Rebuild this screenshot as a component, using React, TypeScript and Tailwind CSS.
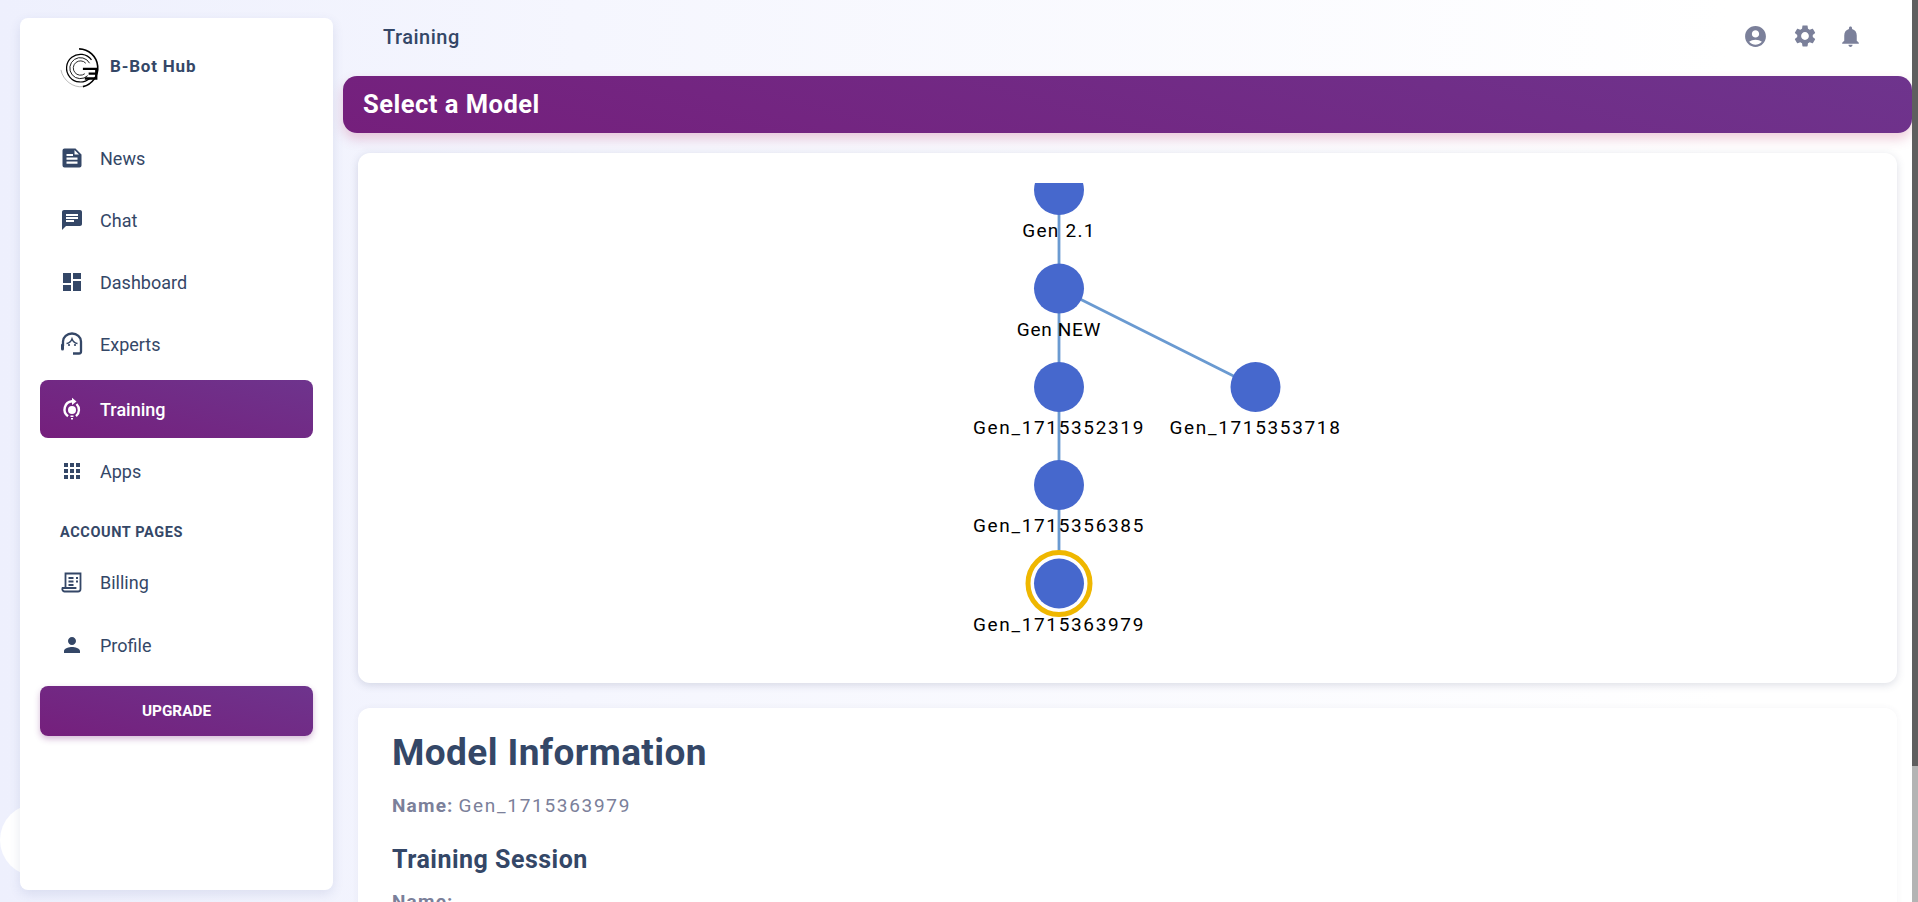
import React from "react";

const F = "font-['Roboto','Liberation_Sans',sans-serif]";

function P({ d, className = "" }: { d: string; className?: string }) {
  return (
    <svg viewBox="0 0 24 24" fill="currentColor" className={className}>
      <path fillRule="evenodd" d={d} />
    </svg>
  );
}

const icons: Record<string, string> = {
  News: "M5 2.500h10.500L21.500 8.500V19.500a2 2 0 0 1-2 2H4.500a2 2 0 0 1-2-2V4.500a2 2 0 0 1 2-2zM6.500 8v2H13V8zM6.500 11.500v2.200H17.500v-2.200zM6.500 15.500v2.200H17.500v-2.200zM14.500 4v4.500H19z",
  Chat: "M20 2H4c-1.100 0-2 .9-2 2v18l4-4h14c1.100 0 2-.9 2-2V4c0-1.100-.9-2-2-2zM6 9h12v2H6V9zm8 5H6v-2h8v2zm4-6H6V6h12v2z",
  Dashboard: "M3 13h8V3H3v10zm0 8h8v-6H3v6zm10 0h8V11h-8v10zm0-18v6h8V3h-8z",
  Apps: "M4 8h4V4H4v4zm6 12h4v-4h-4v4zm-6 0h4v-4H4v4zm0-6h4v-4H4v4zm6 0h4v-4h-4v4zm6-10v4h4V4h-4zm-6 4h4V4h-4v4zm6 6h4v-4h-4v4zm0 6h4v-4h-4v4z",
  Profile: "M12 12c2.210 0 4-1.790 4-4s-1.790-4-4-4-4 1.790-4 4 1.790 4 4 4zm0 2c-2.670 0-8 1.340-8 4v2h16v-2c0-2.660-5.330-4-8-4z",
};

function Experts() {
  return (
    <svg viewBox="0 0 24 24" fill="none" stroke="currentColor" strokeWidth="2.300" className="w-6 h-6">
      <path d="M3 14v-4.500a9 8 0 0 1 18 0v10a2 2 0 0 1-2 2h-6" />
      <path d="M6.500 11.500c2.500-.2 4.500-2 5.500-4.500 1 2.500 3 4.300 5.500 4.500" strokeWidth="1.600" />
      <circle cx="9" cy="13" r="1.100" fill="currentColor" stroke="none" />
      <circle cx="15" cy="13" r="1.100" fill="currentColor" stroke="none" />
      <path d="M2.500 13v4" strokeWidth="3" strokeLinecap="round" />
    </svg>
  );
}

function TrainingIcon() {
  return (
    <svg viewBox="0 0 24 24" fill="none" stroke="currentColor" className="w-6 h-6">
      <path d="M8 19.200A8.300 8.300 0 0 1 12 4.200h1.500" strokeWidth="2.400" />
      <path d="M16.500 7a8.300 8.300 0 0 1-.5 12.200" strokeWidth="2.400" />
      <path d="M12 .8l4.500 3.700L12 8z" fill="currentColor" stroke="none" />
      <circle cx="12" cy="13" r="4" fill="currentColor" stroke="none" />
      <path d="M10.500 18.500h3v1.500h-3zM11 21h2v1.500h-2z" fill="currentColor" stroke="none" />
    </svg>
  );
}

function BillingIcon() {
  return (
    <svg viewBox="0 0 24 24" fill="none" stroke="currentColor" strokeWidth="1.800" className="w-6 h-6">
      <path d="M5.500 18V3.500h15V19a2.500 2.500 0 0 1-2.500 2.500H4.500A2.500 2.500 0 0 1 2.500 18h13v1" />
      <path d="M8.500 8h5M8.500 11.500h5M8.500 15h5M16 8h2M16 11.500h2" />
    </svg>
  );
}

function Item({ label, icon, active }: { label: string; icon: React.ReactNode; active?: boolean }) {
  return (
    <div
      className={
        active
          ? "flex items-center h-[58px] rounded-lg mx-5 pl-[20px] gap-[16px] text-white font-medium bg-[linear-gradient(15deg,#751f7c,#6e348d)] text-[18px]"
          : "flex items-center h-[58px] rounded-lg mx-5 pl-[20px] gap-[16px] text-[#344767] text-[18px]"
      }
    >
      <span className="w-6 h-6 flex items-center justify-center shrink-0">{icon}</span>
      <span>{label}</span>
    </div>
  );
}

function Logo() {
  return (
    <svg viewBox="0 0 44 44" className="w-[42px] h-[42px] shrink-0" fill="none">
      <path d="M20 2A20 20 0 0 1 24 41.500" stroke="#000" strokeWidth="1.700" />
      <path d="M31 33A14.500 14.500 0 1 1 33 13.500" stroke="#000" strokeWidth="1.300" />
      <path d="M29 30A11 11 0 1 1 31 17" stroke="#111" strokeWidth="1" />
      <path d="M26 28A7.500 7.500 0 1 1 27 17" stroke="#222" strokeWidth="1" />
      <path d="M1 24C3 35 14 43 24 41.500" stroke="#888" strokeWidth=".6" />
      <path d="M24 23h14v5h-8h8v5H26" stroke="#000" strokeWidth="2.400" />
    </svg>
  );
}

function Node({ cx, cy, label, ls }: { cx: number; cy: number; label: string; ls: number }) {
  return (
    <>
      <circle cx={cx} cy={cy} r="25" fill="#4668cd" />
      <text x={cx} y={cy + 47} textAnchor="middle" fontSize="19" fontFamily="Roboto, sans-serif" letterSpacing={ls} fill="#000">
        {label}
      </text>
    </>
  );
}

function Tree() {
  return (
    <svg width="1539" height="530" viewBox="358 153 1539 530" className="block">
      <defs>
        <clipPath id="c">
          <rect x="358" y="183" width="1539" height="480" />
        </clipPath>
      </defs>
      <g clipPath="url(#c)">
        <g stroke="#6a9ad1" strokeWidth="2.800">
          <path d="M1059 190V583M1059 288.500L1255.500 387" />
        </g>
        <Node cx={1059} cy={190} label="Gen 2.1" ls={1.3} />
        <Node cx={1059} cy={288.5} label="Gen NEW" ls={0.7} />
        <Node cx={1059} cy={387} label="Gen_1715352319" ls={1.65} />
        <Node cx={1255.5} cy={387} label="Gen_1715353718" ls={1.65} />
        <Node cx={1059} cy={485} label="Gen_1715356385" ls={1.65} />
        <circle cx="1059" cy="583.5" r="31" fill="#fff" stroke="#efb700" strokeWidth="5" />
        <Node cx={1059} cy={583.5} label="Gen_1715363979" ls={1.65} />
      </g>
    </svg>
  );
}

export default function App() {
  return (
    <div className={`${F} relative w-[1918px] h-[902px] overflow-hidden flex bg-gradient-to-r from-[#eef0fd] via-[#f5f6fe] via-30% to-white to-90% text-[#344767]`}>
      <div className="absolute left-0 top-[804px] w-[72px] h-[72px] rounded-full bg-white" />
      <aside className="relative z-10 ml-5 mt-[18px] w-[313px] h-[872px] shrink-0 rounded-lg bg-white shadow-[0_4px_12px_rgba(60,70,140,0.12)] flex flex-col">
        <div className="flex items-center h-[42px] mt-[29px] ml-[40px] gap-[8px]">
          <Logo />
          <span className="font-bold text-[17px] tracking-[0.8px] relative -top-[1px]">B-Bot Hub</span>
        </div>
        <nav className="mt-[40px]">
          <Item label="News" icon={<P d={icons.News} className="w-6 h-6" />} />
          <div className="mt-[4px]"><Item label="Chat" icon={<P d={icons.Chat} className="w-6 h-6" />} /></div>
          <div className="mt-[4px]"><Item label="Dashboard" icon={<P d={icons.Dashboard} className="w-6 h-6" />} /></div>
          <div className="mt-[4px]"><Item label="Experts" icon={<Experts />} /></div>
          <div className="mt-[7px]"><Item label="Training" active icon={<TrainingIcon />} /></div>
          <div className="mt-[4px]"><Item label="Apps" icon={<P d={icons.Apps} className="w-6 h-6" />} /></div>
          <div className="mt-[18px] ml-[40px] h-[30px] flex items-center text-[14.500px] font-bold tracking-[0.6px]">ACCOUNT PAGES</div>
          <div className="mt-[5px]"><Item label="Billing" icon={<BillingIcon />} /></div>
          <div className="mt-[5px]"><Item label="Profile" icon={<P d={icons.Profile} className="w-6 h-6" />} /></div>
        </nav>
        <div className="mx-5 mt-[12px] h-[50px] rounded-lg bg-[linear-gradient(15deg,#751f7c,#6e348d)] text-white font-bold text-[15.300px] flex items-center justify-center shadow-[0_3px_6px_rgba(117,31,124,0.3)]">
          UPGRADE
        </div>
      </aside>

      <main className="ml-[10px] w-[1569px] shrink-0 flex flex-col">
        <header className="h-[76px] shrink-0 flex items-start justify-between">
          <span className="ml-[40px] mt-[25px] font-medium text-[20px] leading-[24px] tracking-[0.5px]">Training</span>
          <div className="flex items-center gap-[24px] mt-[23px] mr-[49px] text-[#7b809a]">
            <P className="w-[25px] h-[25px]" d="M12 2C6.480 2 2 6.480 2 12s4.480 10 10 10 10-4.480 10-10S17.520 2 12 2zm0 4c1.930 0 3.500 1.570 3.500 3.500S13.930 13 12 13s-3.500-1.570-3.500-3.500S10.070 6 12 6zm0 14c-2.030 0-4.430-.82-6.140-2.880C7.550 15.800 9.680 15 12 15s4.450.8 6.140 2.120C16.430 19.180 14.030 20 12 20z" />
            <P className="w-[26px] h-[26px]" d="M19.140 12.940c.04-.3.060-.61.060-.94 0-.32-.02-.64-.07-.94l2.030-1.580c.18-.14.230-.41.120-.61l-1.920-3.320c-.12-.22-.37-.29-.59-.22l-2.390.96c-.5-.38-1.030-.7-1.620-.94l-.36-2.540c-.04-.24-.24-.41-.48-.41h-3.840c-.24 0-.43.17-.47.41l-.36 2.540c-.59.24-1.130.57-1.620.94l-2.390-.96c-.22-.08-.47 0-.59.22L2.740 8.870c-.12.21-.08.47.12.61l2.030 1.580c-.05.3-.09.63-.09.94s.02.64.07.94l-2.030 1.580c-.18.14-.23.41-.12.61l1.920 3.320c.12.22.37.29.59.22l2.390-.96c.5.38 1.030.7 1.620.94l.36 2.540c.05.24.24.41.48.41h3.840c.24 0 .44-.17.47-.41l.36-2.540c.59-.24 1.130-.56 1.620-.94l2.390.96c.22.08.47 0 .59-.22l1.920-3.320c.12-.22.07-.47-.12-.61l-2.010-1.580zM12 15.600c-1.980 0-3.600-1.620-3.600-3.600s1.620-3.600 3.600-3.600 3.600 1.620 3.600 3.600-1.620 3.600-3.600 3.600z" />
            <P className="w-[25px] h-[25px] -ml-[4px]" d="M12 22c1.100 0 2-.9 2-2h-4c0 1.100.9 2 2 2zm6-6v-5c0-3.070-1.630-5.640-4.500-6.320V4c0-.83-.67-1.500-1.500-1.500s-1.500.67-1.500 1.500v.68C7.640 5.360 6 7.920 6 11v5l-2 2v1h16v-1l-2-2z" />
          </div>
        </header>

        <div className="h-[57px] shrink-0 rounded-[14px] bg-[linear-gradient(15deg,#751f7c,#6e348d)] flex items-center pl-5 text-white font-bold text-[25.500px] tracking-[0.5px] shadow-[0_6px_12px_rgba(190,60,110,0.25)]">
          Select a Model
        </div>

        <section className="mt-[20px] mx-[15px] h-[530px] shrink-0 rounded-xl bg-white shadow-[0_2px_8px_rgba(60,70,110,0.18)] overflow-hidden">
          <Tree />
        </section>

        <section className="mt-[25px] mx-[15px] h-[300px] shrink-0 rounded-t-xl bg-white px-[34px] pt-[22px] shadow-[0_0_6px_rgba(60,70,110,0.06)]">
          <h1 className="text-[37px] leading-[46px] font-bold tracking-[0.4px]">Model Information</h1>
          <p className="mt-[18px] text-[19px] leading-[24px] text-[#7b809a]"><b className="tracking-[1.2px]">Name:</b> <span className="tracking-[1.7px]">Gen_1715363979</span></p>
          <h2 className="mt-[26px] text-[25px] leading-[32px] font-bold tracking-[0.5px]">Training Session</h2>
          <p className="mt-[14px] text-[19px] leading-[24px] text-[#7b809a] tracking-[1.2px] font-bold">Name:</p>
        </section>
      </main>
      <div className="absolute right-0 top-0 w-[6px] h-[902px] bg-[#b4b4b4] flex flex-col">
        <div className="h-[766px] bg-[#5f5f5f]" />
      </div>
    </div>
  );
}
